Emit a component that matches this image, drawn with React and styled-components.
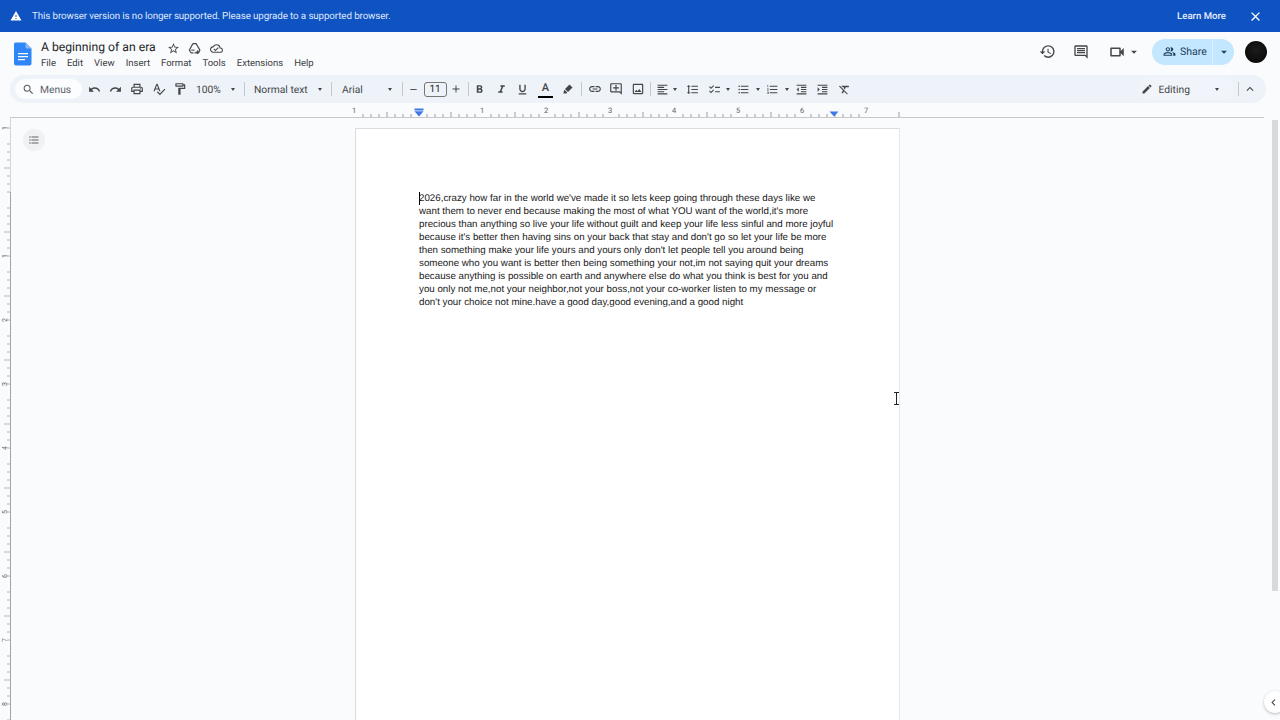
import React from 'react';
import styled, { createGlobalStyle } from 'styled-components';
import {
  MdWarning, MdClose, MdStarBorder, MdOutlineCloudDone, MdHistory,
  MdOutlineComment, MdOutlineVideocam, MdArrowDropDown, MdOutlinePeopleAlt, MdSearch,
  MdUndo, MdRedo, MdOutlinePrint, MdOutlineSpellcheck, MdOutlineFormatPaint, MdRemove, MdAdd,
  MdFormatBold, MdFormatItalic, MdFormatUnderlined, MdLink,
  MdOutlineAddComment, MdOutlineImage, MdFormatAlignLeft, MdFormatLineSpacing, MdOutlineChecklist,
  MdFormatListBulleted, MdFormatListNumbered, MdFormatIndentDecrease, MdFormatIndentIncrease,
  MdFormatClear, MdEdit, MdExpandLess, MdChevronLeft,
} from 'react-icons/md';

const GlobalStyle = createGlobalStyle`
  html, body {
    margin: 0;
    height: 100%;
    overflow: hidden;
    background: #f9fbfd;
    font-family: Roboto, "Noto Sans", sans-serif;
    text-rendering: geometricPrecision;
  }
`;

const Shell = styled.div`
  width: 1280px;
  height: 720px;
  display: flex;
  flex-direction: column;
  position: relative;
  overflow: hidden;
  color: #444746;
`;

const Banner = styled.div`
  height: 32px;
  flex: none;
  background: #0f52c2;
  color: #dfe9fb;
  display: flex;
  align-items: center;
  padding: 0 17px 0 10px;
  font-size: 9.8px;
  letter-spacing: -0.12px;
  svg { color: #fff; flex: none; }
`;

const BannerText = styled.span`
  margin-left: 10px;
  flex: 1;
`;

const LearnMore = styled.span`
  color: #e6eefc;
  font-size: 9.6px;
  font-weight: 500;
  letter-spacing: 0;
  margin-right: 22px;
`;

const Header = styled.header`
  height: 43px;
  flex: none;
  display: flex;
  align-items: center;
  padding: 0 13px 0 14px;
`;

const Logo = styled.svg`
  width: 18px;
  height: 24px;
  flex: none;
  margin-top: 1px;
`;

const TitleBlock = styled.div`
  margin-left: 9px;
  flex: 1;
  display: flex;
  flex-direction: column;
`;

const TitleRow = styled.div`
  display: flex;
  align-items: center;
  height: 17px;
  margin-top: 2px;
  svg { color: #444746; }
`;

const DocTitle = styled.span`
  font-size: 12.2px;
  color: #1f1f1f;
  margin-right: 7px;
`;

const TitleIcon = styled.span`
  width: 21.5px;
  display: flex;
  justify-content: center;
  margin-top: 2px;
`;

const MenuRow = styled.nav`
  display: flex;
  gap: 11px;
  height: 14px;
  margin-top: 1px;
  align-items: center;
  font-size: 9.52px;
  color: #3c4043;
`;

const HeaderActions = styled.div`
  display: flex;
  align-items: center;
  margin-bottom: 4px;
`;

const ActionIcon = styled.span`
  width: 33px;
  display: flex;
  justify-content: center;
  align-items: center;
  color: #444746;
`;

const MeetButton = styled.span`
  display: flex;
  align-items: center;
  width: 44px;
  margin-left: 11px;
  color: #444746;
  svg:last-child { margin-left: 1px; }
`;

const ShareButton = styled.div`
  width: 82px;
  height: 26px;
  border-radius: 13px;
  background: #c2e7ff;
  color: #21405c;
  display: flex;
  align-items: center;
  font-size: 10.5px;
`;

const ShareMain = styled.span`
  flex: 1;
  height: 100%;
  display: flex;
  align-items: center;
  gap: 4px;
  padding-left: 11px;
  border-right: 1px solid #dcf1ff;
`;

const ShareCaret = styled.span`
  width: 21px;
  display: flex;
  justify-content: center;
`;

const Avatar = styled.div`
  width: 22px;
  height: 22px;
  margin-left: 11px;
  border-radius: 50%;
  background: radial-gradient(circle at 50% 40%, #1c1c1c, #050505);
`;

const Toolbar = styled.div`
  height: 28px;
  flex: none;
  margin: 0 14px 0 10px;
  padding-left: 5px;
  border-radius: 14px;
  background: #eef2f9;
  display: flex;
  align-items: center;
  font-size: 10.3px;
  color: #444746;
`;

const SearchPill = styled.div`
  width: 67px;
  height: 20px;
  flex: none;
  border-radius: 10px;
  background: #fbfdff;
  display: flex;
  align-items: center;
  gap: 5px;
  padding-left: 7px;
  box-sizing: border-box;
  margin-right: 1.5px;
  color: #5f6368;
`;

const Tool = styled.span`
  width: ${p => p.$w || 21.5}px;
  height: 22px;
  flex: none;
  display: flex;
  align-items: center;
  justify-content: center;
  position: relative;
`;

const DropDown = styled.span`
  width: ${p => p.$w}px;
  height: 22px;
  flex: none;
  display: flex;
  align-items: center;
  justify-content: space-between;
  padding: 0 ${p => p.$pr || 5}px 0 ${p => p.$pl || 0}px;
  box-sizing: border-box;
`;

const ToolSep = styled.span`
  width: 1px;
  height: 14px;
  flex: none;
  background: #c7c7c7;
  margin: 0 ${p => p.$r || 0}px 0 ${p => p.$l || 0}px;
`;

const TinyCaret = styled.span`
  width: 0;
  height: 0;
  flex: none;
  border-left: 2.5px solid transparent;
  border-right: 2.5px solid transparent;
  border-top: 3px solid #444746;
`;

const SizeBox = styled.span`
  width: 23px;
  height: 15px;
  flex: none;
  border: 1px solid #747775;
  border-radius: 3px;
  box-sizing: border-box;
  display: flex;
  align-items: center;
  justify-content: center;
  font-size: 10px;
  color: #1f1f1f;
`;

const ColorBar = styled.span`
  position: absolute;
  left: 4.5px;
  right: 4.5px;
  bottom: 2px;
  height: 2.5px;
  background: #000;
`;

const ColorLetter = styled.span`
  font-size: 11px;
  font-weight: 500;
  margin-top: -4px;
`;

const Spacer = styled.span`
  flex: 1;
`;

const EditingMode = styled.div`
  width: 96px;
  height: 22px;
  flex: none;
  display: flex;
  align-items: center;
  gap: 6px;
  padding-left: 4px;
  box-sizing: border-box;
  border-radius: 11px;
  background: #f1f5fb;
  ${TinyCaret} { margin-left: 19.5px; }
`;

const RulerRow = styled.div`
  height: 15px;
  box-sizing: border-box;
  flex: none;
  margin: 0 16px 0 10px;
  border-bottom: 1px solid #c7c7c7;
  svg { display: block; }
`;

const Workspace = styled.div`
  flex: 1;
  min-height: 0;
  display: flex;
  position: relative;
`;

const SideRuler = styled.svg`
  width: 11px;
  height: 602px;
  flex: none;
  display: block;
`;

const OutlineBubble = styled.div`
  position: absolute;
  left: 23px;
  top: 11px;
  width: 22px;
  height: 22px;
  border-radius: 50%;
  background: #f0f1f2;
  color: #5f6368;
  display: flex;
  align-items: center;
  justify-content: center;
`;

const Canvas = styled.main`
  flex: 1;
  padding: 10px 0 0 344px;
`;

const Page = styled.article`
  width: 545px;
  height: 640px;
  box-sizing: border-box;
  padding: 63px 0 0 63px;
  background: #fff;
  border: 1px solid #dadce0;
  border-right-color: #e6e8ea;
  font-family: "Liberation Sans", Arial, sans-serif;
  font-size: 9.76px;
  line-height: 13px;
  color: #1a1a1a;
  position: relative;
`;

const DocLine = styled.div`
  white-space: nowrap;
`;

const Caret = styled.span`
  position: absolute;
  left: 63px;
  top: 63px;
  width: 1px;
  height: 13px;
  background: #000;
`;

const Scrollbar = styled.div`
  position: absolute;
  right: 2px;
  top: 2px;
  width: 6px;
  height: 471px;
  background: #d7dadc;
`;

const SideToggle = styled.div`
  position: absolute;
  right: -6px;
  bottom: 7px;
  width: 22px;
  height: 22px;
  border-radius: 50%;
  background: #fff;
  box-shadow: 0 1px 3px rgba(0, 0, 0, 0.25);
  display: flex;
  align-items: center;
  padding-left: 3px;
  box-sizing: border-box;
  color: #444746;
`;

const TextCursor = styled.svg`
  position: absolute;
  left: 892px;
  top: 274px;
  width: 9px;
  height: 13px;
`;

const docLines = [
  "2026,crazy how far in the world we've made it so lets keep going through these days like we",
  'want them to never end because making the most of what YOU want of the world,it\'s more',
  'precious than anything so live your life without guilt and keep your life less sinful and more joyful',
  "because it's better then having sins on your back that stay and don't go so let your life be more",
  "then something make your life yours and yours only don't let people tell you around being",
  'someone who you want is better then being something your not,im not saying quit your dreams',
  'because anything is possible on earth and anywhere else do what you think is best for you and',
  'you only not me,not your neighbor,not your boss,not your co-worker listen to my message or',
  "don't your choice not mine.have a good day,good evening,and a good night",
];

const menus = ['File', 'Edit', 'View', 'Insert', 'Format', 'Tools', 'Extensions', 'Help'];

// ruler runs 354..899px with 64px per inch, zero at the left margin (419)
function TopRuler() {
  const ticks = [];
  for (let i = 0; i <= 64; i++) {
    const x = 355 + i * 8;
    if (i % 8 === 0) continue;
    ticks.push(<line key={i} x1={x} x2={x} y1={i % 4 === 0 ? 9 : 11} y2={14} stroke="#80868b" strokeWidth="0.8" />);
  }
  const labels = [[354, 1], [482, 1], [546, 2], [610, 3], [674, 4], [738, 5], [802, 6], [866, 7]];
  return (
    <svg width="1254" height="14" viewBox="10 0 1254 14">
      {ticks}
      {labels.map(([x, n], i) => (
        <text key={i} x={x} y="9.5" fontSize="7.5" fill="#5f6368" textAnchor="middle" fontFamily="Roboto, sans-serif">{n}</text>
      ))}
      <line x1="899" x2="899" y1="9" y2="14" stroke="#80868b" strokeWidth="0.8" />
      <path d="M414.5 5.5h9v2h-9z" fill="#3b78e7" />
      <path d="M414.5 8.2h9l-4.5 5.3z" fill="#3b78e7" />
      <path d="M829.5 8.5h9l-4.5 5z" fill="#3b78e7" />
    </svg>
  );
}

function LeftRuler() {
  const ticks = [];
  for (let i = 0; i < 76; i++) {
    const y = 10 + i * 8;
    if (i % 8 === 1) continue;
    ticks.push(<line key={i} x1={i % 4 === 1 ? 4 : 7} x2="10" y1={y} y2={y} stroke="#a0a4a8" strokeWidth="0.8" />);
  }
  const labels = [[10, 1], [138, 1], [202, 2], [266, 3], [330, 4], [394, 5], [458, 6], [522, 7], [586, 8]];
  return (
    <SideRuler viewBox="0 0 11 602">
      {ticks}
      <line x1="10.5" x2="10.5" y1="0" y2="74" stroke="#d4d6d8" />
      <line x1="10.5" x2="10.5" y1="74" y2="602" stroke="#a0a4a8" />
      {labels.map(([y, n], i) => (
        <text key={i} x="5" y={y} fontSize="7" fill="#5f6368" textAnchor="middle" dominantBaseline="central"
          fontFamily="Roboto, sans-serif" transform={`rotate(-90 5 ${y})`}>{n}</text>
      ))}
    </SideRuler>
  );
}

function DriveIcon() {
  return (
    <svg width="13" height="13" viewBox="0 0 24 24" fill="none" stroke="currentColor" strokeWidth="2" strokeLinejoin="round">
      <path d="M9 3h6l7 12-3 5H12" />
      <path d="M9 3L2.5 15l3 5H10" />
      <path d="M6 15h6" />
      <path d="M18 15v7M14.5 18.5h7" />
    </svg>
  );
}

function HighlightIcon() {
  return (
    <svg width="12" height="12" viewBox="0 0 24 24" fill="currentColor">
      <path d="M15 3l6 6-9 9-6-6z" />
      <path d="M5 13.5l5.5 5.5-2 2H3v-2.5z" />
    </svg>
  );
}

export default function App() {
  return (
    <Shell>
      <GlobalStyle />
      <Banner>
        <MdWarning size={12} />
        <BannerText>This browser version is no longer supported. Please upgrade to a supported browser.</BannerText>
        <LearnMore>Learn More</LearnMore>
        <MdClose size={15} />
      </Banner>

      <Header>
        <Logo viewBox="0 0 18 24">
          <path d="M1.5 0.5H11.5L17.5 6.5V21.5a2 2 0 0 1-2 2H2a2 2 0 0 1-2-2V2a1.5 1.5 0 0 1 1.5-1.5z" fill="#3086f6" />
          <path d="M11.5 0.5L17.5 6.5H13a1.5 1.5 0 0 1-1.5-1.5z" fill="#8ab8fa" />
          <path d="M4 11h10v1.3H4zM4 14h10v1.3H4zM4 17h7v1.3H4z" fill="#fff" />
        </Logo>
        <TitleBlock>
          <TitleRow>
            <DocTitle>A beginning of an era</DocTitle>
            <TitleIcon><MdStarBorder size={13} /></TitleIcon>
            <TitleIcon><DriveIcon /></TitleIcon>
            <TitleIcon><MdOutlineCloudDone size={13} /></TitleIcon>
          </TitleRow>
          <MenuRow>
            {menus.map(m => <span key={m}>{m}</span>)}
          </MenuRow>
        </TitleBlock>
        <HeaderActions>
          <ActionIcon><MdHistory size={17} /></ActionIcon>
          <ActionIcon><MdOutlineComment size={16} /></ActionIcon>
          <MeetButton><MdOutlineVideocam size={18} /><MdArrowDropDown size={14} /></MeetButton>
          <ShareButton>
            <ShareMain><MdOutlinePeopleAlt size={13} />Share</ShareMain>
            <ShareCaret><MdArrowDropDown size={14} /></ShareCaret>
          </ShareButton>
          <Avatar />
        </HeaderActions>
      </Header>

      <Toolbar>
        <SearchPill><MdSearch size={13} />Menus</SearchPill>
        <Tool><MdUndo size={13} /></Tool>
        <Tool><MdRedo size={13} /></Tool>
        <Tool><MdOutlinePrint size={14} /></Tool>
        <Tool><MdOutlineSpellcheck size={14} /></Tool>
        <Tool><MdOutlineFormatPaint size={14} /></Tool>
        <DropDown $w={48.5} $pl={5}>100%<TinyCaret /></DropDown>
        <ToolSep $l={4.5} $r={4.5} />
        <DropDown $w={77} $pl={4.5}>Normal text<TinyCaret /></DropDown>
        <ToolSep $l={4.5} $r={4.5} />
        <DropDown $w={60} $pl={5.5}>Arial<TinyCaret /></DropDown>
        <ToolSep $l={5} />
        <Tool $w={21}><MdRemove size={11} /></Tool>
        <SizeBox>11</SizeBox>
        <Tool $w={19}><MdAdd size={12} /></Tool>
        <ToolSep $l={2.5} />
        <Tool><MdFormatBold size={13} /></Tool>
        <Tool><MdFormatItalic size={13} /></Tool>
        <Tool><MdFormatUnderlined size={13} /></Tool>
        <Tool $w={24}><ColorLetter>A</ColorLetter><ColorBar /></Tool>
        <Tool $w={20}><HighlightIcon /></Tool>
        <ToolSep $l={3.5} $r={2} />
        <Tool><MdLink size={14} /></Tool>
        <Tool><MdOutlineAddComment size={14} /></Tool>
        <Tool><MdOutlineImage size={14} /></Tool>
        <ToolSep $l={1.5} />
        <DropDown $w={28.5} $pl={4.5} $pr={3}><MdFormatAlignLeft size={13} /><TinyCaret /></DropDown>
        <Tool $w={25}><MdFormatLineSpacing size={13} /></Tool>
        <DropDown $w={28} $pl={3} $pr={3}><MdOutlineChecklist size={13} /><TinyCaret /></DropDown>
        <DropDown $w={30} $pl={4} $pr={3}><MdFormatListBulleted size={13} /><TinyCaret /></DropDown>
        <DropDown $w={28} $pl={3} $pr={2}><MdFormatListNumbered size={13} /><TinyCaret /></DropDown>
        <Tool><MdFormatIndentDecrease size={13} /></Tool>
        <Tool><MdFormatIndentIncrease size={13} /></Tool>
        <Tool><MdFormatClear size={13} /></Tool>
        <Spacer />
        <EditingMode><MdEdit size={12} /><span>Editing</span><TinyCaret /></EditingMode>
        <ToolSep $l={5} $r={1} />
        <Tool><MdExpandLess size={14} /></Tool>
        <Tool $w={5} />
      </Toolbar>

      <RulerRow><TopRuler /></RulerRow>

      <Workspace>
        <LeftRuler />
        <OutlineBubble><MdFormatListBulleted size={12} /></OutlineBubble>
        <Canvas>
          <Page>
            <Caret />
            {docLines.map((line, i) => <DocLine key={i}>{line}</DocLine>)}
          </Page>
        </Canvas>
        <TextCursor viewBox="0 0 9 13">
          <path d="M2 .5h5M4.5 .5v12M2 12.5h5" stroke="#222" strokeWidth="1" fill="none" />
        </TextCursor>
        <Scrollbar />
        <SideToggle><MdChevronLeft size={13} /></SideToggle>
      </Workspace>
    </Shell>
  );
}
